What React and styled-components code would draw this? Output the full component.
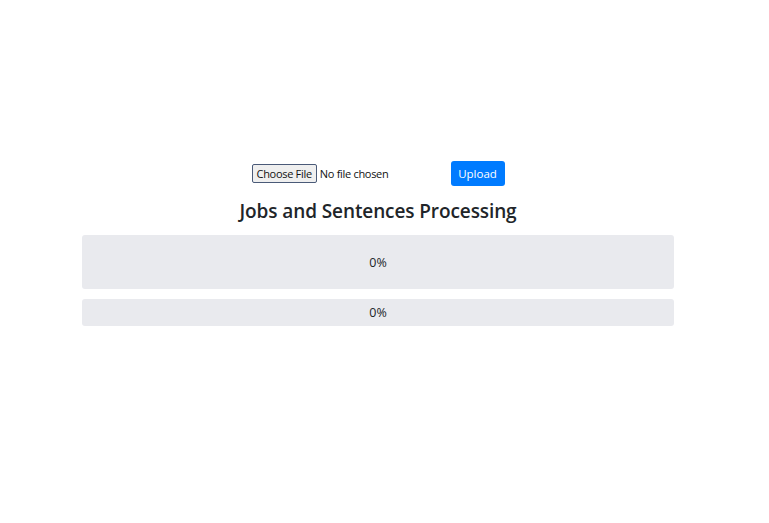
import React, { useState } from "react";
import styled, { createGlobalStyle } from "styled-components";

const GlobalStyle = createGlobalStyle`
	body {
		margin: 0;
		background: #fff;
		font-family: "Open Sans", "Noto Sans", sans-serif;
		color: #212529;
	}
`;

const Page = styled.div`
	padding: 161px 0 0 82px;
	width: 592px;
`;

const UploadRow = styled.form`
	display: flex;
	justify-content: center;
	align-items: center;
	height: 25px;
`;

const FileInput = styled.input`
	width: 199px;
	font-family: "Open Sans", "Noto Sans", sans-serif;
	font-size: 11px;
	color: #111;
	letter-spacing: -0.3px;

	&::file-selector-button {
		font-family: inherit;
		font-size: 11px;
		letter-spacing: -0.3px;
		height: 19px;
		padding: 0 4px;
		margin-right: 3px;
		background: #efefef;
		border: 1px solid #4a5a78;
		border-radius: 2px;
		color: #111;
	}
`;

const Button = styled.button`
	width: 54px;
	height: 25px;
	padding: 0;
	background: #007bff;
	color: #fff;
	border: none;
	border-radius: 3px;
	font-family: "Open Sans", "Noto Sans", sans-serif;
	font-size: 11.5px;
	cursor: pointer;
`;

const Title = styled.h2`
	margin: 13px 0 12px;
	text-align: center;
	font-size: 19px;
	font-weight: 600;
	line-height: 24px;
	color: #212529;
	letter-spacing: -0.1px;
`;

const Progress = styled.div`
	display: flex;
	align-items: center;
	justify-content: center;
	height: ${p => p.$height}px;
	margin-bottom: 10px;
	background: #e9eaee;
	border-radius: 3px;
	font-size: 12.5px;
	color: #212529;
`;

export default function App() {
	const [jobs] = useState(0);
	const [sentences] = useState(0);

	return (
		<>
			<GlobalStyle />
			<Page>
				<UploadRow onSubmit={e => e.preventDefault()}>
					<FileInput type="file" />
					<Button type="submit">Upload</Button>
				</UploadRow>
				<Title>Jobs and Sentences Processing</Title>
				<Progress $height={54}>{jobs}%</Progress>
				<Progress $height={27}>{sentences}%</Progress>
			</Page>
		</>
	);
}
